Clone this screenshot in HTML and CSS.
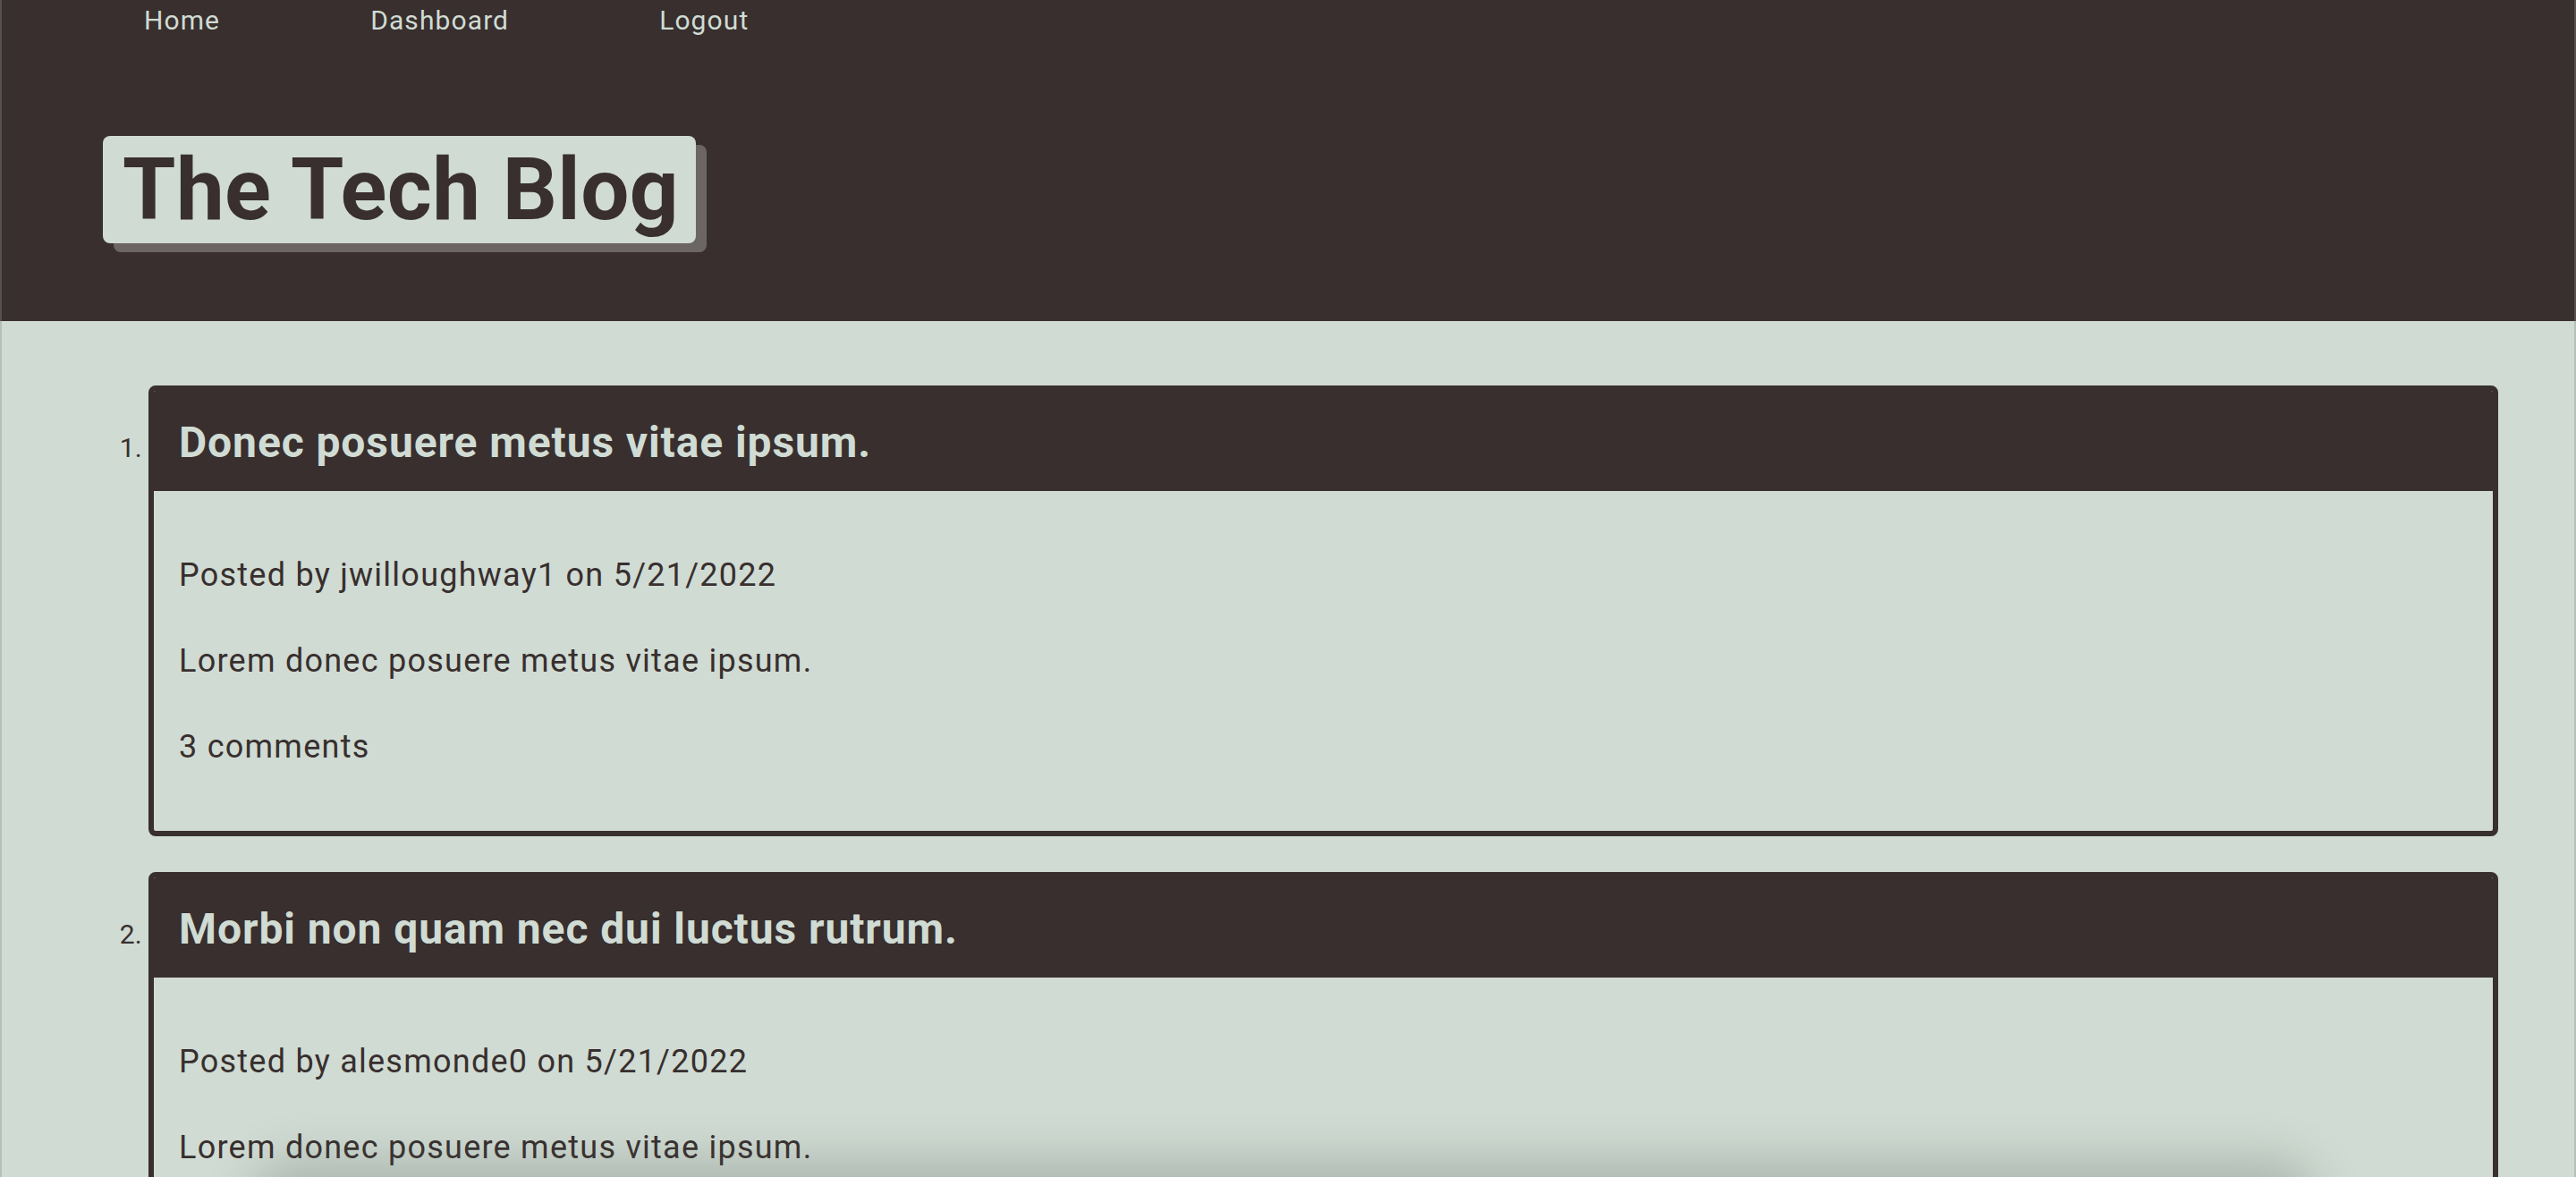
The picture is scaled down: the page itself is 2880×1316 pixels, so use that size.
FILE: index.html
```html
<!DOCTYPE html>
<html lang="en">
<head>
<meta charset="utf-8">
<title>The Tech Blog</title>
<link rel="stylesheet" href="styles.css">
</head>
<body>
<header class="site-header">
  <nav class="nav">
    <a class="nav-link" href="#">Home</a>
    <a class="nav-link" href="#">Dashboard</a>
    <a class="nav-link" href="#">Logout</a>
  </nav>
  <div class="brand-wrap">
    <h1 class="brand">The Tech Blog</h1>
  </div>
</header>
<main class="main">
  <ol class="posts">
    <li class="post-item">
      <article class="card">
        <h2 class="card-title">Donec posuere metus vitae ipsum.</h2>
        <div class="card-body">
          <p class="card-text">Posted by jwilloughway1 on 5/21/2022</p>
          <p class="card-text">Lorem donec posuere metus vitae ipsum.</p>
          <p class="card-text">3 comments</p>
        </div>
      </article>
    </li>
    <li class="post-item">
      <article class="card">
        <h2 class="card-title">Morbi non quam nec dui luctus rutrum.</h2>
        <div class="card-body">
          <p class="card-text">Posted by alesmonde0 on 5/21/2022</p>
          <p class="card-text">Lorem donec posuere metus vitae ipsum.</p>
          <p class="card-text">2 comments</p>
        </div>
      </article>
    </li>
  </ol>
</main>
<div class="window-frame"></div>
<div class="dock-shadow"></div>
</body>
</html>
```
FILE: styles.css
```css
html, body {
  margin: 0;
  padding: 0;
}
body {
  background: #d0dbd3;
  color: #382f2e;
  font-family: Roboto, "Liberation Sans", sans-serif;
  overflow: hidden;
  height: 1316px;
}
.site-header {
  background: #382f2e;
  height: 359px;
  box-sizing: border-box;
}
.nav {
  display: flex;
  gap: 168px;
  padding-left: 161px;
  height: 45px;
  align-items: center;
}
.nav-link {
  color: #d0dbd3;
  text-decoration: none;
  font-size: 30px;
  line-height: 45px;
  letter-spacing: 1.1px;
}
.brand-wrap {
  padding: 107px 0 0 115px;
}
.brand {
  display: inline-block;
  margin: 0;
  background: #d0dbd3;
  color: #382f2e;
  font-size: 96px;
  font-weight: 700;
  line-height: 120px;
  letter-spacing: 0.4px;
  padding: 0 19px 0 22px;
  border-radius: 8px;
  box-shadow: 12px 10px 0 #6b6664;
}
.main {
  padding: 72px 87px 0 0;
}
.posts {
  margin: 0;
  padding-left: 166px;
  display: flex;
  flex-direction: column;
  gap: 40px;
  font-size: 30px;
}
.post-item::marker {
  color: #382f2e;
}
.card {
  border: 6px solid #382f2e;
  border-radius: 8px;
  overflow: hidden;
}
.card-title {
  margin: 0;
  background: #382f2e;
  color: #d0dbd3;
  font-size: 48px;
  font-weight: 700;
  line-height: 64px;
  letter-spacing: 0.9px;
  padding: 26px 22px 22px 28px;
}
.card-body {
  padding: 28px 28px;
}
.card-text {
  margin: 36px 0;
  font-size: 36px;
  line-height: 60px;
  letter-spacing: 1.25px;
}
.window-frame {
  position: fixed;
  inset: 0;
  border-left: 2px solid rgba(140, 140, 140, 0.35);
  border-right: 2px solid rgba(140, 140, 140, 0.35);
  pointer-events: none;
}
.dock-shadow {
  position: fixed;
  left: 300px;
  right: 310px;
  bottom: -60px;
  height: 60px;
  border-radius: 40px;
  box-shadow: 0 0 50px 20px rgba(80, 95, 85, 0.28);
  pointer-events: none;
}
```
